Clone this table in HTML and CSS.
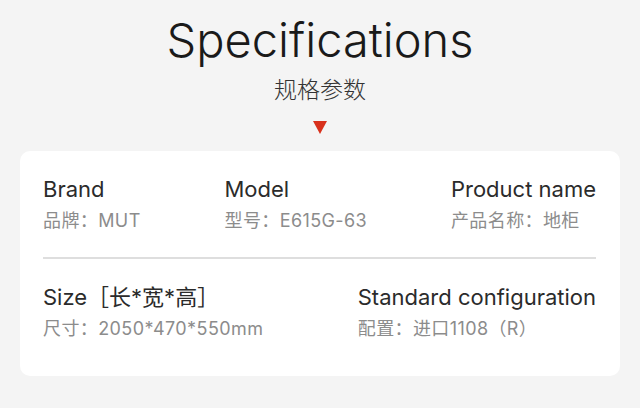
FILE: index.html
```html
<!DOCTYPE html>
<html lang="zh">
<head>
<meta charset="utf-8">
<link rel="stylesheet" href="styles.css">
</head>
<body>
<header class="head">
  <h1 class="title">Specifications</h1>
  <div class="subtitle">规格参数</div>
  <div class="arrow"></div>
</header>
<section class="card">
  <div class="row row-top">
    <div class="item">
      <div class="label">Brand</div>
      <div class="value">品牌：MUT</div>
    </div>
    <div class="item">
      <div class="label">Model</div>
      <div class="value">型号：E615G-63</div>
    </div>
    <div class="item">
      <div class="label">Product name</div>
      <div class="value">产品名称：地柜</div>
    </div>
  </div>
  <div class="divider"></div>
  <div class="row row-bottom">
    <div class="item">
      <div class="label">Size［长*宽*高］</div>
      <div class="value">尺寸：2050*470*550mm</div>
    </div>
    <div class="item">
      <div class="label">Standard configuration</div>
      <div class="value">配置：进口1108（R）</div>
    </div>
  </div>
</section>
</body>
</html>
```
FILE: styles.css
```css
html, body {
  margin: 0;
  padding: 0;
}
body {
  width: 640px;
  height: 408px;
  background: #f4f4f4;
  font-family: "Inter", "Noto Sans CJK SC", sans-serif;
  color: #333;
  overflow: hidden;
}
.head {
  display: flex;
  flex-direction: column;
  align-items: center;
  padding-top: 11px;
}
.title {
  margin: 0;
  font-family: "Inter", sans-serif;
  font-weight: 300;
  font-size: 47px;
  line-height: 58px;
  color: #1a1a1a;
  letter-spacing: 0;
}
.subtitle {
  margin-top: 5px;
  font-family: "Noto Sans CJK SC", sans-serif;
  font-weight: 300;
  font-size: 23px;
  line-height: 28px;
  color: #333;
}
.arrow {
  margin-top: 19px;
  width: 0;
  height: 0;
  border-left: 7.5px solid transparent;
  border-right: 7.5px solid transparent;
  border-top: 13px solid #d8311c;
}
.card {
  margin: 17px 20px 0;
  height: 225px;
  box-sizing: border-box;
  background: #fff;
  border-radius: 10px;
  padding: 25px 24px 0 23px;
}
.row {
  display: flex;
  justify-content: space-between;
}
.label {
  font-size: 22px;
  line-height: 26px;
  color: #2b2b2b;
}
.value {
  margin-top: 8px;
  font-size: 18px;
  line-height: 22px;
  letter-spacing: 0.4px;
  color: #8c8c8c;
}
.divider {
  margin-top: 25px;
  height: 2px;
  background: #dedede;
}
.row-bottom {
  margin-top: 25px;
}
```
